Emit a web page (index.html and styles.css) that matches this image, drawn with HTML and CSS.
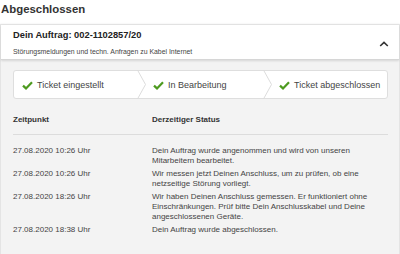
FILE: index.html
```html
<!DOCTYPE html>
<html lang="de">
<head>
    <meta charset="UTF-8">
    <meta name="viewport" content="width=device-width, initial-scale=1.0">
    <title>Abgeschlossen</title>
    <link rel="stylesheet" href="styles.css">
</head>
<body>
    <h1 class="page-title">Abgeschlossen</h1>
    <div class="card">
        <div class="card-header">
            <div class="card-heading">
                <h2>Dein Auftrag: 002-1102857/20</h2>
                <p>Störungsmeldungen und techn. Anfragen zu Kabel Internet</p>
            </div>
            <svg class="toggle" width="10" height="6" viewBox="0 0 10 6">
                <polyline points="1.2,5 5,1.4 8.8,5" fill="none" stroke="#333" stroke-width="1.6"/>
            </svg>
        </div>
        <div class="card-body">
            <div class="stepper">
                <div class="step first">
                    <svg class="check" width="11" height="9" viewBox="0 0 11 9"><path d="M1 4.6 L4 7.4 L10 1.2" fill="none" stroke="#4d9a1f" stroke-width="2.2"/></svg>
                    <span>Ticket eingestellt</span>
                </div>
                <svg class="sep" width="9" height="29" viewBox="0 0 9 29"><polyline points="0.5,0 8.5,14.5 0.5,29" fill="none" stroke="#dcdcdc" stroke-width="1"/></svg>
                <div class="step">
                    <svg class="check" width="11" height="9" viewBox="0 0 11 9"><path d="M1 4.6 L4 7.4 L10 1.2" fill="none" stroke="#4d9a1f" stroke-width="2.2"/></svg>
                    <span>In Bearbeitung</span>
                </div>
                <svg class="sep" width="9" height="29" viewBox="0 0 9 29"><polyline points="0.5,0 8.5,14.5 0.5,29" fill="none" stroke="#dcdcdc" stroke-width="1"/></svg>
                <div class="step">
                    <svg class="check" width="11" height="9" viewBox="0 0 11 9"><path d="M1 4.6 L4 7.4 L10 1.2" fill="none" stroke="#4d9a1f" stroke-width="2.2"/></svg>
                    <span>Ticket abgeschlossen</span>
                </div>
            </div>

            <div class="history">
                <div class="history-head">Zeitpunkt</div>
                <div class="history-head">Derzeitiger Status</div>

                <div class="time">27.08.2020 10:26 Uhr</div>
                <div class="status">Dein Auftrag wurde angenommen und wird von unseren Mitarbeitern bearbeitet.</div>

                <div class="time">27.08.2020 10:26 Uhr</div>
                <div class="status">Wir messen jetzt Deinen Anschluss, um zu prüfen, ob eine netzseitige Störung vorliegt.</div>

                <div class="time">27.08.2020 18:26 Uhr</div>
                <div class="status">Wir haben Deinen Anschluss gemessen. Er funktioniert ohne Einschränkungen. Prüf bitte Dein Anschlusskabel und Deine angeschlossenen Geräte.</div>

                <div class="time">27.08.2020 18:38 Uhr</div>
                <div class="status">Dein Auftrag wurde abgeschlossen.</div>
            </div>
        </div>
    </div>
</body>
</html>
```

FILE: styles.css
```css
body {
    margin: 0;
    font-family: "Liberation Sans", Arial, sans-serif;
    color: #333;
    background-color: #fff;
}
.page-title {
    margin: 0 0 8px 0;
    padding: 2px 1px 0 1px;
    font-size: 11.4px;
    line-height: 14px;
    font-weight: bold;
}
.card {
    border: 1px solid #e4e4e4;
    border-bottom: none;
    box-shadow: 0 0 2px rgba(0,0,0,0.08);
}
.card-header {
    display: flex;
    align-items: center;
    padding: 5px 10px 3px 12px;
    background-color: #fff;
    border-bottom: 1px solid #d6d6d6;
    box-shadow: 0 1px 2px rgba(0,0,0,0.12);
    position: relative;
}
.card-heading {
    flex: 1;
}
.card-heading h2 {
    margin: 0 0 6px 0;
    font-size: 9.3px;
    line-height: 11px;
    font-weight: bold;
    color: #222;
}
.card-heading p {
    margin: 0;
    font-size: 6.9px;
    line-height: 9px;
    color: #444;
}
.toggle {
    display: block;
    margin-top: 1px;
}
.card-body {
    background-color: #f3f3f3;
    padding: 10px 11px 30px 12px;
}
.stepper {
    display: grid;
    grid-template-columns: 123px 9px 117px 9px 1fr;
    height: 29px;
    box-sizing: border-box;
    background-color: #fff;
    border: 1px solid #dedede;
    border-radius: 3px;
}
.step {
    display: flex;
    align-items: center;
    gap: 4px;
    padding-left: 7px;
    font-size: 9px;
    color: #444;
    white-space: nowrap;
}
.step.first {
    padding-left: 8px;
}
.step .check {
    display: block;
}
.sep {
    display: block;
    margin-top: -1px;
}
.history {
    display: grid;
    grid-template-columns: 139px 1fr;
    row-gap: 3px;
    margin-top: 16px;
    font-size: 8px;
    line-height: 10px;
    color: #444;
}
.history-head {
    font-weight: bold;
    color: #333;
    padding-bottom: 9px;
    border-bottom: 1px solid #dcdcdc;
    margin-bottom: 8px;
}
.status {
    padding-right: 6px;
}
```
